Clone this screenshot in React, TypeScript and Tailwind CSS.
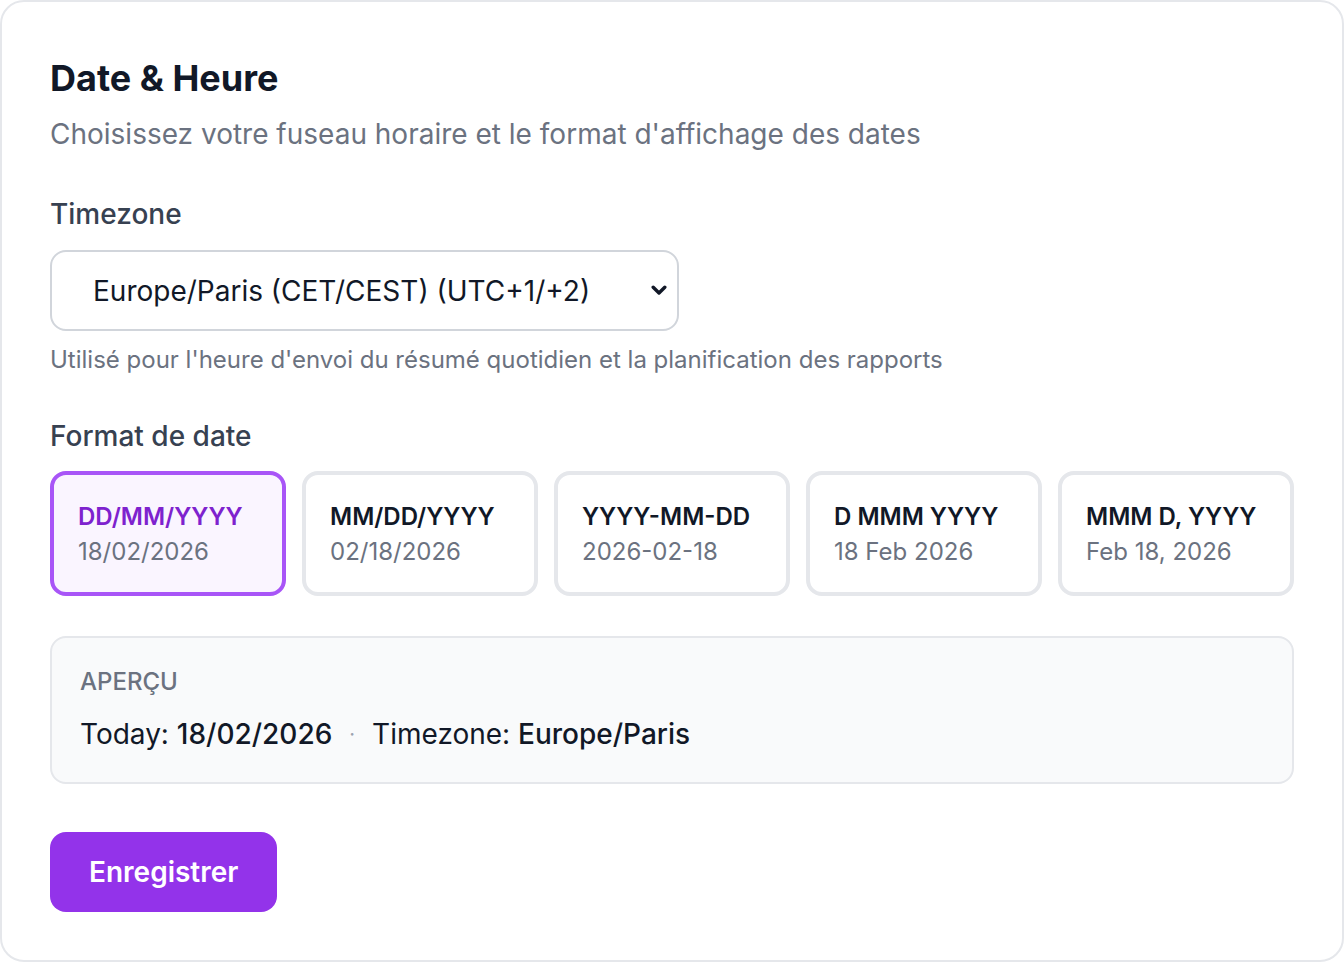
import { useState } from "react"

const formats = [
  { id: "dmy", label: "DD/MM/YYYY", sample: "18/02/2026" },
  { id: "mdy", label: "MM/DD/YYYY", sample: "02/18/2026" },
  { id: "iso", label: "YYYY-MM-DD", sample: "2026-02-18" },
  { id: "dmmm", label: "D MMM YYYY", sample: "18 Feb 2026" },
  { id: "mmmd", label: "MMM D, YYYY", sample: "Feb 18, 2026" },
]

export default function App() {
  const [selected, setSelected] = useState("dmy")
  const current = formats.find((f) => f.id === selected) ?? formats[0]

  return (
    <div className="min-h-screen bg-white font-['Inter',sans-serif]">
      <div className="rounded-[24px] border-2 border-[#e5e7eb] bg-white p-12">
        {/* Header */}
        <h1 className="text-[36px] font-bold leading-[56px] text-[#111827]">Date &amp; Heure</h1>
        <p className="mt-2 text-[28px] leading-[40px] text-[#6b7280]">
          Choisissez votre fuseau horaire et le format d'affichage des dates
        </p>

        {/* Timezone */}
        <div className="mt-[40px] text-[28px] font-medium leading-[40px] text-[#374151]">Timezone</div>
        <div className="mt-4 flex h-[81px] w-[629px] items-center justify-between rounded-[16px] border-2 border-[#d1d5db] bg-white pl-[41px] pr-[10px]">
          <span className="text-[28px] leading-[40px] text-[#111827]">Europe/Paris (CET/CEST) (UTC+1/+2)</span>
          <svg width="16" height="11" viewBox="0 0 16 11" fill="none">
            <path d="M2.2 2.2 8 8 13.8 2.2" stroke="#111827" strokeWidth="3.4" strokeLinecap="round" strokeLinejoin="round" />
          </svg>
        </div>
        <p className="mt-[13px] text-[24px] leading-[32px] text-[#6b7280]">
          Utilisé pour l'heure d'envoi du résumé quotidien et la planification des rapports
        </p>

        {/* Date format */}
        <div className="mt-[40px] text-[28px] font-medium leading-[40px] text-[#374151]">Format de date</div>
        <div className="mt-[15px] grid grid-cols-5 gap-4">
          {formats.map((f) => {
            const active = f.id === selected
            return (
              <button
                key={f.id}
                type="button"
                onClick={() => setSelected(f.id)}
                className={`rounded-[16px] border-4 px-6 pb-[24px] pt-[26px] text-left ${
                  active ? "border-[#a855f7] bg-[#faf5ff]" : "border-[#e5e7eb] bg-white"
                }`}
              >
                <div
                  className={`text-[24px] font-semibold leading-[32px] ${
                    active ? "text-[#7e22ce]" : "text-[#111827]"
                  }`}
                >
                  {f.label}
                </div>
                <div className="mt-[3px] text-[24px] leading-[32px] text-[#6b7280]">{f.sample}</div>
              </button>
            )
          })}
        </div>

        {/* Preview */}
        <div className="mt-10 rounded-[16px] border-2 border-[#e5e7eb] bg-[#f9fafb] px-7 pb-7 pt-[28px]">
          <div className="text-[24px] font-medium uppercase leading-[32px] text-[#6b7280]">Aperçu</div>
          <div className="mt-4 flex items-center text-[28px] leading-[40px] text-[#111827]">
            <span>
              Today: <span className="font-medium">{current.sample}</span>
            </span>
            <span className="mx-[17px] text-[20px] text-[#9ca3af]">·</span>
            <span>
              Timezone: <span className="font-medium">Europe/Paris</span>
            </span>
          </div>
        </div>

        <button
          type="button"
          className="mt-12 h-[80px] rounded-[16px] bg-[#9333ea] px-[39px] text-[28px] font-semibold leading-[40px] text-white"
        >
          Enregistrer
        </button>
      </div>
    </div>
  )
}
